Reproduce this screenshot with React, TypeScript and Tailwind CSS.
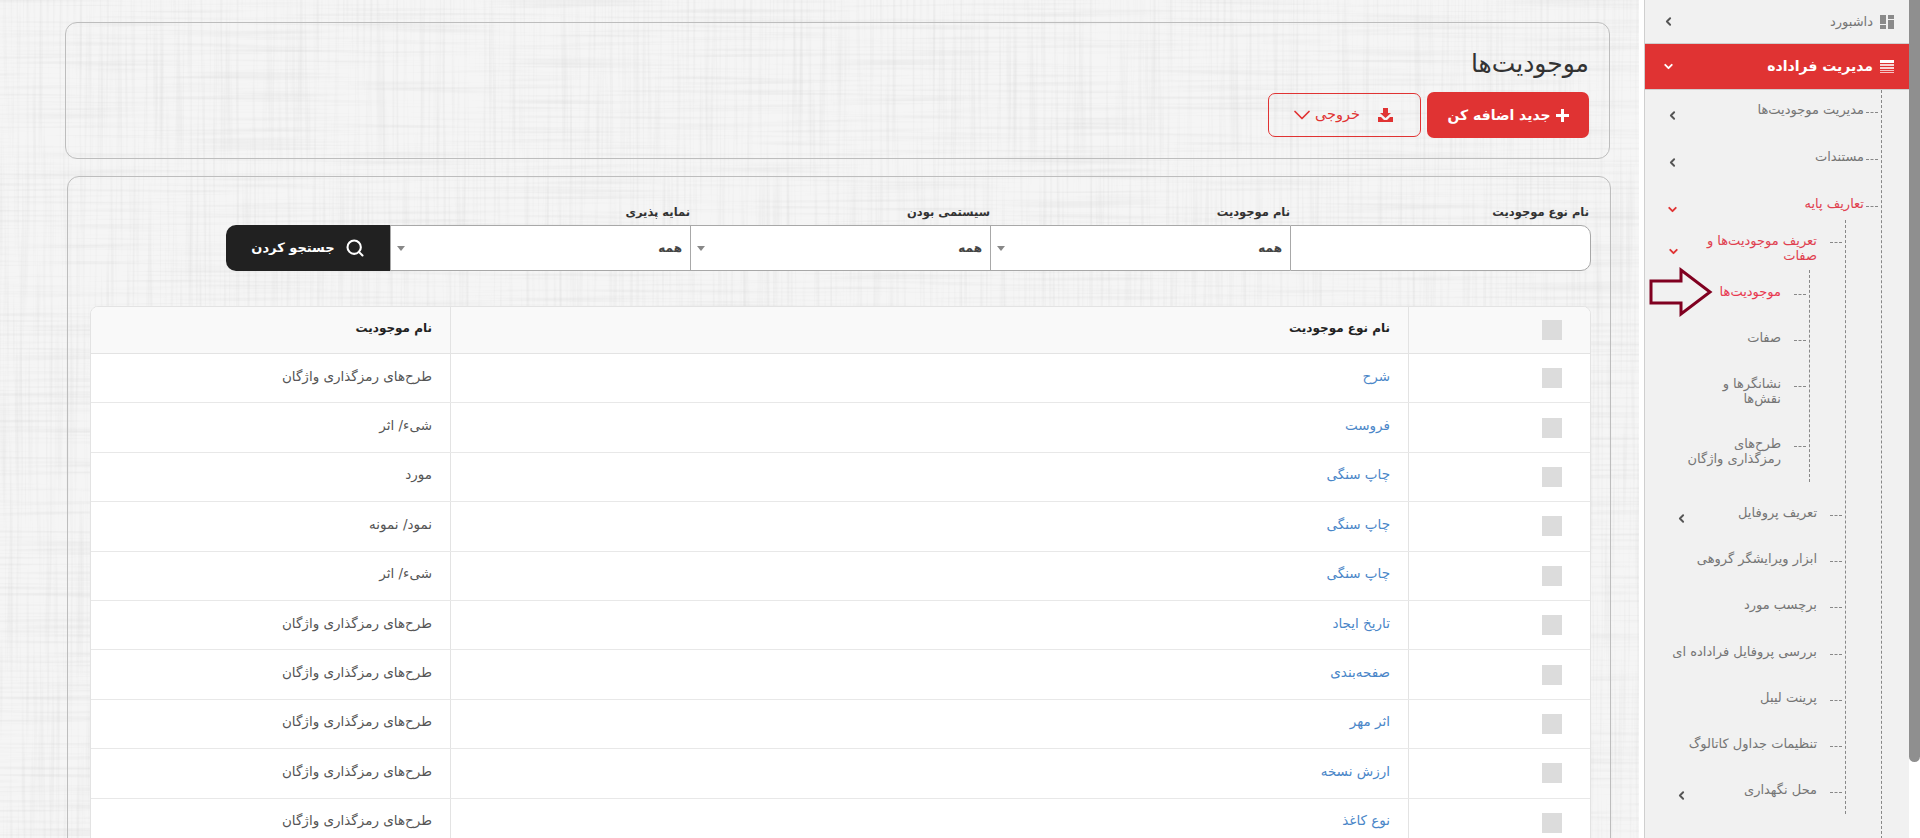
import { ChevronDown, ChevronLeft, Search } from 'lucide-react';

const rows = [
  ['شرح', 'طرح‌های رمزگذاری واژگان'],
  ['فروست', 'شیء/ اثر'],
  ['چاپ سنگی', 'مورد'],
  ['چاپ سنگی', 'نمود/ نمونه'],
  ['چاپ سنگی', 'شیء/ اثر'],
  ['تاریخ ایجاد', 'طرح‌های رمزگذاری واژگان'],
  ['صفحه‌بندی', 'طرح‌های رمزگذاری واژگان'],
  ['اثر مهر', 'طرح‌های رمزگذاری واژگان'],
  ['ارزش نسخه', 'طرح‌های رمزگذاری واژگان'],
  ['نوع کاغذ', 'طرح‌های رمزگذاری واژگان'],
];

const filters = [
  { label: 'نام موجودیت' },
  { label: 'سیستمی بودن' },
  { label: 'نمایه پذیری' },
];

function Tick({ className = '' }: { className?: string }) {
  return <span className={`w-[12px] shrink-0 border-t border-dashed border-[#888] ${className}`} />;
}

function Chevron({ open, red, className = '' }: { open?: boolean; red?: boolean; className?: string }) {
  const Icon = open ? ChevronDown : ChevronLeft;
  return <Icon size={13} strokeWidth={3.5} className={`shrink-0 ${red ? 'text-[#e03333]' : 'text-[#555]'} ${className}`} />;
}

function Level1({ label, red, open, className = '' }: { label: string; red?: boolean; open?: boolean; className?: string }) {
  return (
    <li className={`flex items-start pt-[10px] pr-[3px] pl-[21px] ${className}`}>
      <Tick className="mt-[12px]" />
      <span className={`mr-[2px] text-[13px] leading-[20px] whitespace-nowrap ${red ? 'text-[#e0404f]' : 'text-[#757575]'}`}>{label}</span>
      <Chevron open={open} red={red} className="mr-auto mt-[9px]" />
    </li>
  );
}

function Level2({ label, chevron }: { label: string; chevron?: boolean }) {
  return (
    <li className="flex h-[46.2px] items-start pt-[12px] pr-[3px] pl-[30px]">
      <Tick className="mt-[12px]" />
      <span className="mr-[13px] text-[13px] leading-[20px] whitespace-nowrap text-[#757575]">{label}</span>
      {chevron && <Chevron className="mr-auto mt-[9px]" />}
    </li>
  );
}

function Level3({ label, active, className = '' }: { label: string; active?: boolean; className?: string }) {
  return (
    <li className={`flex items-start pr-[3px] ${className}`}>
      <Tick className="mt-[10px]" />
      <span className={`mr-[13px] text-[13px] leading-[15px] whitespace-pre-line ${active ? 'text-[#e8384f]' : 'text-[#757575]'}`}>{label}</span>
    </li>
  );
}

function Sidebar() {
  return (
    <aside className="relative h-full w-[265px] shrink-0 overflow-hidden border-l border-[#cfcfcf] bg-[#f1f1f1]">
      <div className="flex h-[43px] items-center pr-[15px] pl-[17px]">
        <svg width="14" height="14" viewBox="0 0 14 14" className="shrink-0 fill-[#8a8a8a]">
          <rect x="0" y="0" width="6" height="9" />
          <rect x="8" y="0" width="6" height="4" />
          <rect x="0" y="10" width="6" height="4" />
          <rect x="8" y="5" width="6" height="9" />
        </svg>
        <span className="mr-[7px] text-[13px] text-[#757575]">داشبورد</span>
        <Chevron className="mr-auto" />
      </div>
      <div className="flex h-[47px] items-center border-y border-[#cfcfcf] bg-[#e03333] pr-[15px] pl-[17px]">
        <svg width="14" height="14" viewBox="0 0 14 14" className="shrink-0 fill-white">
          <rect x="0" y="0" width="14" height="3" />
          <rect x="0" y="4" width="14" height="2" opacity=".8" />
          <rect x="0" y="7" width="14" height="2" opacity=".8" />
          <rect x="0" y="10" width="14" height="1" opacity=".7" />
          <rect x="0" y="12" width="14" height="1" opacity=".7" />
        </svg>
        <span className="mr-[7px] text-[14px] font-bold text-white">مدیریت فراداده</span>
        <ChevronDown size={13} strokeWidth={3.5} className="mr-auto text-white" />
      </div>
      <ul className="mr-[27px] border-r border-dashed border-[#888] pb-[30px]">
        <Level1 label="مدیریت موجودیت‌ها" className="h-[47px]" />
        <Level1 label="مستندات" className="h-[47px]" />
        <Level1 label="تعاریف پایه" red open className="h-[36px]" />
        <li>
          <ul className="mr-[35px] border-r border-dashed border-[#888]">
            <li className="flex h-[50px] items-start pt-[13px] pr-[3px] pl-[22px]">
              <Tick className="mt-[9px]" />
              <span className="mr-[13px] w-[118px] text-[13px] leading-[15px] text-[#e0404f]">تعریف موجودیت‌ها و صفات</span>
              <Chevron open red className="mr-auto mt-[12px]" />
            </li>
            <li>
              <ul className="mr-[35px] mb-[9px] border-r border-dashed border-[#888]">
                <Level3 label="موجودیت‌ها" active className="h-[46px] pt-[14px]" />
                <Level3 label="صفات" className="h-[46px] pt-[14px]" />
                <Level3 label={'نشانگرها و\nنقش‌ها'} className="h-[59px] pt-[14px]" />
                <Level3 label={'طرح‌های\nرمزگذاری واژگان'} className="h-[61px] pt-[15px]" />
              </ul>
            </li>
            <Level2 label="تعریف پروفایل" chevron />
            <Level2 label="ابزار ویرایشگر گروهی" />
            <Level2 label="برچسب مورد" />
            <Level2 label="بررسی پروفایل فراداده ای" />
            <Level2 label="پرینت لیبل" />
            <Level2 label="تنظیمات جداول کاتالوگ" />
            <Level2 label="محل نگهداری" chevron />
          </ul>
        </li>
      </ul>
      <svg width="64" height="50" viewBox="0 0 64 50" className="absolute top-[267px] left-[4px]">
        <path d="M2 14H32V3L61 25L32 47V36H2Z" fill="none" stroke="#800020" strokeWidth="3" />
      </svg>
    </aside>
  );
}

// linen pattern behind the cards
function Linen() {
  return (
    <svg className="absolute inset-0 h-full w-full" aria-hidden="true">
      <filter id="linen-h" x="0" y="0" width="100%" height="100%">
        <feTurbulence type="fractalNoise" baseFrequency="0.006 0.3" numOctaves="2" seed="4" />
        <feColorMatrix values="0 0 0 0 0.5  0 0 0 0 0.5  0 0 0 0 0.5  0.45 0 0 0 -0.21" />
      </filter>
      <filter id="linen-v" x="0" y="0" width="100%" height="100%">
        <feTurbulence type="fractalNoise" baseFrequency="0.3 0.006" numOctaves="2" seed="9" />
        <feColorMatrix values="0 0 0 0 0.5  0 0 0 0 0.5  0 0 0 0 0.5  0.45 0 0 0 -0.21" />
      </filter>
      <rect width="100%" height="100%" filter="url(#linen-h)" />
      <rect width="100%" height="100%" filter="url(#linen-v)" />
    </svg>
  );
}

function Main() {
  return (
    <main className="relative h-full min-w-0 flex-1 overflow-hidden border-r-[5px] border-white bg-[#f5f5f5]">
      <Linen />
      <div className="relative pt-[22px] pr-[29px] pl-[65px]">
        <section className="h-[137px] rounded-[12px] border border-[#bdbdbd] pt-[26px] pr-[20px]">
          <h1 className="text-[25px] leading-[30px] text-[#333]">موجودیت‌ها</h1>
          <div className="mt-[13px] flex items-center gap-[6px]">
            <button className="flex h-[46px] w-[162px] items-center justify-center gap-[5px] rounded-[7px] bg-[#e03333] text-[14px] font-bold text-white">
              <svg width="13" height="13" viewBox="0 0 13 13" className="fill-white"><path d="M5 0h3v5h5v3H8v5H5V8H0V5h5Z" /></svg>
              جدید اضافه کن
            </button>
            <button className="flex h-[44px] w-[153px] items-center justify-center rounded-[7px] border border-[#e03333] text-[14.500px] text-[#e03333]">
              <svg width="15" height="14" viewBox="0 0 15 14" className="fill-[#e03333]"><path d="M5 0h5v5h3L7.500 10 2 5h3ZM0 9h3l3 3h3l3-3h3v5H0Z" /></svg>
              <span className="mr-[18px]">خروجی</span>
              <ChevronDown size={28} strokeWidth={1.5} className="-my-2 -mr-[1px] -ml-[8px]" />
            </button>
          </div>
        </section>

        <section className="mt-[17px] -mr-[1px] ml-[2px] h-[800px] rounded-[12px] border border-[#bdbdbd] pt-[27px] pr-[19px] pl-[22px]">
          <div className="pl-[135px]">
            <div className="flex text-[11.500px] leading-[16px] font-bold text-[#333]">
              <label className="w-[301px] pr-[2px]">نام نوع موجودیت</label>
              {filters.map(f => (
                <label key={f.label} className="w-[300px]">{f.label}</label>
              ))}
            </div>
            <div className="mt-[5px] flex h-[46px]">
              <div className="w-[301px] rounded-r-[10px] border border-[#a8a8a8] bg-white" />
              {filters.map(f => (
                <div key={f.label} className="relative flex w-[300px] items-center border-y border-l border-[#a8a8a8] bg-white pr-[8px] text-[12px] font-bold text-[#444]">
                  همه
                  <span className="absolute top-[20px] left-[6px] h-0 w-0 border-x-[4px] border-t-[5px] border-x-transparent border-t-[#888]" />
                </div>
              ))}
              <button className="flex w-[164px] items-center justify-center gap-[10px] rounded-l-[10px] bg-[#212121] text-[13px] font-bold text-white">
                <Search size={20} strokeWidth={2.5} />
                جستجو کردن
              </button>
            </div>
          </div>

          <div className="mt-[35px] overflow-hidden rounded-t-[8px] border border-[#e3e3e3] bg-white">
            <div className="flex h-[47px] items-center border-b border-[#e3e3e3] bg-[#f9f9f9] text-[12px] font-bold text-[#222]">
              <div className="flex h-full w-[181px] shrink-0 items-center pr-[28px]">
                <span className="size-[20px] bg-[#dcdcdc]" />
              </div>
              <div className="flex h-full flex-1 items-center border-x border-[#e3e3e3] pr-[18px] pb-[4px]">نام نوع موجودیت</div>
              <div className="flex h-full w-[359px] shrink-0 items-center pr-[18px] pb-[4px]">نام موجودیت</div>
            </div>
            {rows.map((r, i) => (
              <div key={i} className="flex h-[49.4px] items-center border-b border-[#e8e8e8] text-[13.500px]">
                <div className="flex h-full w-[181px] shrink-0 items-center pr-[28px]">
                  <span className="size-[20px] bg-[#dcdcdc]" />
                </div>
                <div className="flex h-full flex-1 items-center border-x border-[#e3e3e3] pr-[18px] pb-[5px] text-[#4a86c8]">{r[0]}</div>
                <div className="flex h-full w-[359px] shrink-0 items-center pr-[18px] pb-[5px] text-[#555]">{r[1]}</div>
              </div>
            ))}
          </div>
        </section>
      </div>
    </main>
  );
}

export default function App() {
  return (
    <div dir="rtl" className="flex h-screen w-full overflow-hidden font-['DejaVu_Sans',sans-serif]">
      <div className="h-full w-[11px] shrink-0 bg-white">
        <div className="h-[762px] rounded-b-[6px] bg-[#8f8f8f]" />
      </div>
      <Sidebar />
      <Main />
    </div>
  );
}
